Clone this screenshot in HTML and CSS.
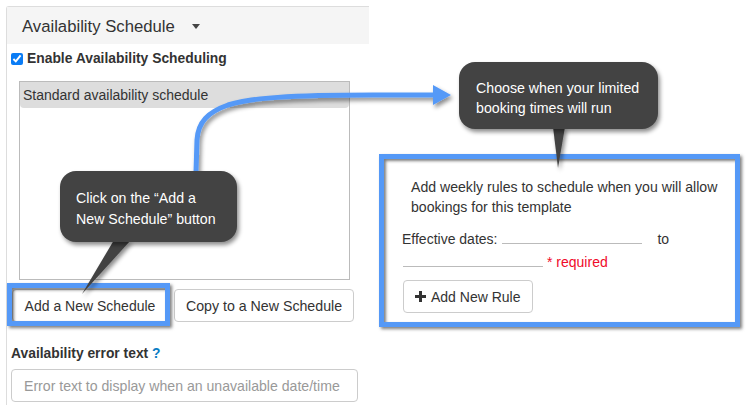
FILE: index.html
```html
<!DOCTYPE html>
<html lang="en">

<head>
    <meta charset="UTF-8">
    <title>Availability Schedule</title>
    <link rel="stylesheet" href="styles.css">
</head>

<body>
    <div class="page">
        <div class="panel">
            <div class="panel_head">
                <span class="panel_title">Availability Schedule</span>
                <span class="caret"></span>
            </div>
            <label class="enable">
                <input type="checkbox" checked>
                <span>Enable Availability Scheduling</span>
            </label>
            <div class="list_box">
                <div class="list_item">Standard availability schedule</div>
            </div>
            <div class="list_buttons">
                <button class="btn btn_add">Add a New Schedule</button>
                <button class="btn btn_copy">Copy to a New Schedule</button>
            </div>
            <div class="error_label">Availability error text <span class="help">?</span></div>
            <input class="error_input" type="text" placeholder="Error text to display when an unavailable date/time">
        </div>

        <div class="rules_box">
            <p class="rules_intro">Add weekly rules to schedule when you will allow bookings for this template</p>
            <div class="dates">
                <div class="dates_row">
                    <span>Effective dates:</span>
                    <span class="date_line"></span>
                    <span class="date_to">to</span>
                </div>
                <div class="dates_row">
                    <span class="date_line date_line_second"></span>
                    <span class="required">* required</span>
                </div>
            </div>
            <button class="btn btn_rule"><span class="plus"></span>Add New Rule</button>
        </div>
    </div>

    <!-- annotations on top of the page -->
    <div class="highlight"></div>
    <svg class="arrows" width="751" height="411" viewBox="0 0 751 411">
        <defs>
            <filter id="soft" x="-20%" y="-20%" width="140%" height="140%">
                <feDropShadow dx="2" dy="3" stdDeviation="2" flood-color="#000" flood-opacity="0.45"></feDropShadow>
            </filter>
        </defs>
        <g filter="url(#soft)">
            <path d="M196 172 L197 140 C198 122 208 112 228 105 C250 98 290 95 373 95 L436 95" fill="none" stroke="#5599f7" stroke-width="5"></path>
            <path d="M433 85 L451 95 L433 105 Z" fill="#5599f7"></path>
        </g>
        <g filter="url(#soft)">
            <path d="M114 240 L131 240 L82 294 Z" fill="#434343"></path>
            <path d="M553 127 L565 127 L558 168 Z" fill="#434343"></path>
        </g>
    </svg>
    <div class="callout callout_add">Click on the “Add a New Schedule” button</div>
    <div class="callout callout_run">Choose when your limited booking times will run</div>
</body>

</html>
```

FILE: styles.css
```css
* {
    box-sizing: border-box;
}

body {
    margin: 0;
    width: 751px;
    height: 411px;
    overflow: hidden;
    background-color: #fff;
    color: #333;
    font-family: "Liberation Sans", Arial, sans-serif;
    font-size: 14px;
}

.page {
    display: flex;
    align-items: flex-start;
    padding: 6px 0 0 6px;
}

.panel {
    width: 363px;
    height: 399px;
    border-left: 1px solid #ddd;
    border-top: 1px solid #ddd;
    border-top-left-radius: 3px;
}

.panel_head {
    display: flex;
    align-items: center;
    height: 37px;
    padding: 2px 0 0 15px;
    background-color: #f5f5f5;
}

.panel_title {
    font-size: 16.7px;
}

.caret {
    margin-left: 17px;
    border-top: 5px solid #444;
    border-left: 4.5px solid transparent;
    border-right: 4.5px solid transparent;
}

.enable {
    display: flex;
    align-items: center;
    height: 16px;
    margin: 6px 0 0 4px;
    font-size: 13.85px;
    font-weight: bold;
    color: #333;
}

.enable input {
    width: 12px;
    height: 12px;
    margin: 1px 4px 0 0;
    accent-color: #0a7cf5;
}

.list_box {
    width: 331px;
    height: 199px;
    margin: 15px 0 0 12px;
    border: 1px solid #bbb;
}

.list_item {
    height: 26px;
    padding: 5px 3px;
    line-height: 17px;
    background-color: #ddd;
    border-radius: 0 0 4px 4px;
}

.list_buttons {
    display: flex;
    gap: 4px;
    margin: 9px 0 0 5px;
}

.btn {
    height: 33px;
    padding: 0;
    background-color: #fff;
    border: 1px solid #ccc;
    border-radius: 4px;
    color: #333;
    font-family: inherit;
    font-size: 14px;
    white-space: nowrap;
}

.btn_add {
    width: 158px;
    padding-right: 2px;
}

.btn_copy {
    width: 180px;
    font-size: 14.2px;
}

.error_label {
    margin: 23px 0 0 4px;
    line-height: 17px;
    font-size: 13.85px;
    font-weight: bold;
}

.help {
    color: #0a7cc4;
}

.error_input {
    display: block;
    width: 347px;
    height: 33px;
    margin: 7px 0 0 4px;
    padding: 0 12px;
    border: 1px solid #ccc;
    border-radius: 4px;
    font-family: inherit;
    font-size: 14.1px;
}

.error_input::placeholder {
    color: #999;
}

.rules_box {
    width: 361px;
    height: 173px;
    margin: 148px 0 0 10px;
    padding: 18px 10px 0 18px;
    background-color: #fff;
    border: 5px solid #5599f7;
    box-shadow: 2px 2px 3px rgba(0, 0, 0, 0.5), inset 2px 2px 3px rgba(0, 0, 0, 0.5);
}

.rules_intro {
    margin: 0 0 0 9px;
    line-height: 20px;
    font-size: 14.1px;
}

.dates {
    margin-top: 7px;
}

.dates_row {
    display: flex;
    align-items: flex-end;
    height: 23px;
}

.date_line {
    width: 140px;
    margin: 0 0 3px 5px;
    border-bottom: 1px solid #bbb;
}

.date_line_second {
    margin-left: 1px;
}

.date_to {
    margin-left: 15px;
}

.required {
    margin-left: 4px;
    color: #f00a2a;
}

.btn_rule {
    display: flex;
    align-items: center;
    margin: 10px 0 0 1px;
    padding: 0 11px;
    width: 130px;
}

.plus {
    flex: none;
    width: 11px;
    height: 11px;
    margin-right: 5px;
    background:
        linear-gradient(#333, #333) center / 11px 3px no-repeat,
        linear-gradient(#333, #333) center / 3px 11px no-repeat;
}

.highlight {
    position: absolute;
    left: 7px;
    top: 283px;
    width: 163px;
    height: 43px;
    border: 5px solid #5599f7;
    box-shadow: 2px 2px 3px rgba(0, 0, 0, 0.5), inset 2px 2px 3px rgba(0, 0, 0, 0.5);
}

.arrows {
    position: absolute;
    left: 0;
    top: 0;
}

.callout {
    position: absolute;
    padding: 17px 16px;
    line-height: 21px;
    font-size: 14.2px;
    background-color: #434343;
    color: #fff;
    border-radius: 16px;
    box-shadow: 2px 3px 4px rgba(0, 0, 0, 0.45);
}

.callout_add {
    left: 60px;
    top: 171px;
    width: 177px;
    height: 71px;
}

.callout_run {
    left: 459px;
    top: 62px;
    width: 199px;
    height: 67px;
    padding: 16px 16px 16px 17px;
    line-height: 20px;
}
```
